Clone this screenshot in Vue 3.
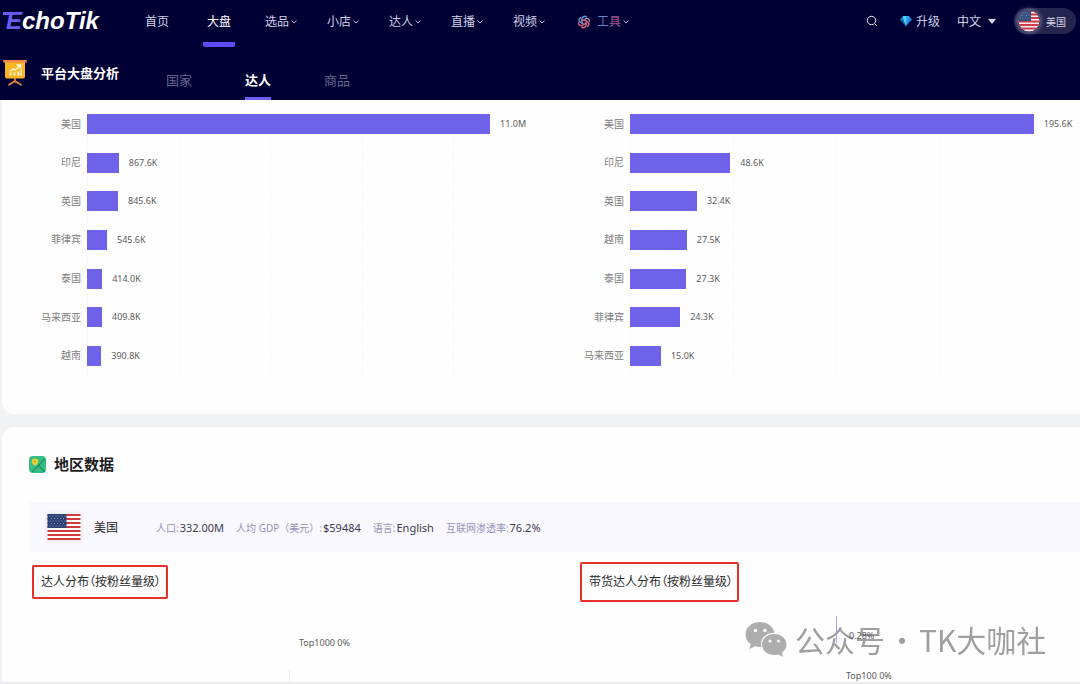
<script setup>
const menus = ['选品', '小店', '达人', '直播', '视频']
const charts = [
  {
    name: '达人数量', max: 12280, ticks: [0, 2500, 5000, 7500, 10000],
    rows: [
      ['美国', 11000, '11.0M'], ['印尼', 867.6, '867.6K'], ['英国', 845.6, '845.6K'],
      ['菲律宾', 545.6, '545.6K'], ['泰国', 414, '414.0K'], ['马来西亚', 409.8, '409.8K'],
      ['越南', 390.8, '390.8K'],
    ],
  },
  {
    name: '带货达人数量', max: 218, ticks: [0, 50, 100, 150],
    rows: [
      ['美国', 195.6, '195.6K'], ['印尼', 48.6, '48.6K'], ['英国', 32.4, '32.4K'],
      ['越南', 27.5, '27.5K'], ['泰国', 27.3, '27.3K'], ['菲律宾', 24.3, '24.3K'],
      ['马来西亚', 15, '15.0K'],
    ],
  },
]
const facts = [
  ['人口:', '332.00M'],
  ['人均 GDP（美元）:', '$59484'],
  ['语言:', 'English'],
  ['互联网渗透率:', '76.2%'],
]
const pct = (v, max) => (v / max) * 100 + '%'
</script>

<template>
  <div class="page">
    <header class="header">
      <div class="topbar">
        <a href="#" class="logo"><span class="logo-e">E</span>choTik</a>
        <nav class="nav">
          <a href="#" class="nav-item home">首页</a>
          <a href="#" class="nav-item active">大盘</a>
          <button v-for="m in menus" :key="m" type="button" class="nav-item">
            {{ m }}<svg class="chev" viewBox="0 0 6 4"><path d="M.5 .5 3 3 5.500 .5" /></svg>
          </button>
          <button type="button" class="nav-item tools">
            <svg class="knot" viewBox="0 0 24 24">
              <defs>
                <linearGradient id="knotFill" gradientUnits="userSpaceOnUse" x1="2" y1="2" x2="22" y2="22">
                  <stop offset="0" stop-color="#3fb4ee" />
                  <stop offset=".5" stop-color="#e8607c" />
                  <stop offset="1" stop-color="#c05cb0" />
                </linearGradient>
              </defs>
              <g fill="none" stroke="url(#knotFill)" stroke-width="1.800">
                <path d="M8.500 14V6.500a4.500 4.500 0 0 1 8.300-2.400M8.500 10l6.300-3.600a4.500 4.500 0 0 1 6.300 5" />
                <path transform="rotate(60 12 12)" d="M8.500 14V6.500a4.500 4.500 0 0 1 8.300-2.400M8.500 10l6.300-3.600a4.500 4.500 0 0 1 6.300 5" />
                <path transform="rotate(120 12 12)" stroke="#e0607c" d="M8.500 14V6.500a4.500 4.500 0 0 1 8.300-2.400M8.500 10l6.300-3.600a4.500 4.500 0 0 1 6.300 5" />
                <path transform="rotate(180 12 12)" stroke="#e0607c" d="M8.500 14V6.500a4.500 4.500 0 0 1 8.300-2.400M8.500 10l6.300-3.600a4.500 4.500 0 0 1 6.300 5" />
                <path transform="rotate(240 12 12)" stroke="#d8608c" d="M8.500 14V6.500a4.500 4.500 0 0 1 8.300-2.400M8.500 10l6.300-3.600a4.500 4.500 0 0 1 6.300 5" />
                <path transform="rotate(300 12 12)" stroke="#55a4e0" d="M8.500 14V6.500a4.500 4.500 0 0 1 8.300-2.400M8.500 10l6.300-3.600a4.500 4.500 0 0 1 6.300 5" />
              </g>
            </svg>
            <span class="tools-text">工具</span><svg class="chev" viewBox="0 0 6 4"><path d="M.5 .5 3 3 5.500 .5" /></svg>
          </button>
        </nav>
        <div class="actions">
          <button type="button" class="search" aria-label="搜索">
            <svg viewBox="0 0 12 12"><circle cx="5.500" cy="5.500" r="4.200" /><path d="m8.600 8.600 2.200 2.200" /></svg>
          </button>
          <a href="#" class="upgrade">
            <svg viewBox="0 0 12 10">
              <path fill="#1c84d8" d="M3 0h6l3 3.500L6 10 0 3.500z" />
              <path fill="#55d0f4" d="M3 0h3v10L3.300 3.500z" />
              <path fill="#2ba8ea" d="M6 0h3l-.3 3.500L6 10z" />
              <path fill="#1764b8" d="M0 3.500h3.300L6 10z" />
            </svg>
            升级
          </a>
          <button type="button" class="lang">中文<i class="caret"></i></button>
          <button type="button" class="country">
            <svg class="round-flag" viewBox="0 0 22 22">
              <defs><clipPath id="disc"><circle cx="11" cy="11" r="10.500" /></clipPath></defs>
              <g clip-path="url(#disc)">
                <path fill="#f4eff3" d="M0 0h22v22H0z" />
                <path stroke="#cf3b48" stroke-width="1.800" d="M0 1h22M0 4.500h22M0 8h22M0 11.500h22M0 15h22M0 18.500h22M0 22h22" />
                <path fill="#34507c" d="M0 0h13v11H0z" />
                <path stroke="#7088ac" stroke-dasharray="1 1.500" d="M2 3h10M3 5.500h9M2 8h10" />
              </g>
            </svg>
            美国
          </button>
        </div>
      </div>
      <div class="subbar">
        <svg class="board" viewBox="0 0 24 26">
          <path stroke="#ee8247" stroke-width="1.600" stroke-linecap="round" fill="none" d="M12 18v4M12 21l-6 3.800M12 21l6 3.800" />
          <path fill="#fcb625" d="M2 2h20v14.500a2 2 0 0 1-2 2H4a2 2 0 0 1-2-2z" />
          <rect width="24" height="2.600" rx="1.300" fill="#f0884a" />
          <path fill="#fff3c8" d="M6.500 12.500h2v3h-2zm4 0h2v3h-2zm4-1h2v4h-2zm3-2h1.500v6h-1.500z" />
          <path stroke="#fffbe8" stroke-width="1.400" fill="none" d="m6.500 11.500 4-2.500 2 1 4.500-4.500M13.500 5H17.500v3.500" />
        </svg>
        <h1>平台大盘分析</h1>
        <nav class="tabs">
          <a href="#" class="tab">国家</a>
          <a href="#" class="tab on">达人</a>
          <a href="#" class="tab">商品</a>
        </nav>
      </div>
    </header>

    <main>
      <section class="card charts">
        <div v-for="c in charts" :key="c.name" class="chart" role="img" :aria-label="c.name">
          <div class="grid">
            <i v-for="t in c.ticks" :key="t" :style="{ left: pct(t, c.max) }"></i>
          </div>
          <div v-for="r in c.rows" :key="r[0]" class="row">
            <span class="name">{{ r[0] }}</span>
            <div class="track">
              <div class="bar" :style="{ width: pct(r[1], c.max) }"></div>
              <span class="val">{{ r[2] }}</span>
            </div>
          </div>
        </div>
      </section>

      <section class="card region">
        <h2>
          <svg viewBox="0 0 17 17">
            <rect width="17" height="17" rx="4" fill="#35bd83" />
            <path stroke="#238f68" stroke-width="1.200" d="M16 3 3 16M9.500 9.500l6.500 6.500" />
            <path fill="#e6d63b" d="M6 2.500a3.200 3.200 0 0 1 3.200 3.200C9.200 8 6 9.500 6 9.500S2.800 8 2.800 5.700A3.200 3.200 0 0 1 6 2.500z" />
            <circle cx="6" cy="5.600" r="1" fill="#c08a1c" />
          </svg>
          地区数据
        </h2>
        <div class="facts">
          <svg class="flag" viewBox="0 0 33 26">
            <path fill="#fff" d="M0 0h33v26H0z" />
            <path stroke="#d23a41" stroke-width="2" d="M0 1h33M0 5h33M0 9h33M0 13h33M0 17h33M0 21h33M0 25h33" />
            <path fill="#2b3f73" d="M0 0h19v14H0z" />
            <path stroke="#8c9cc0" stroke-dasharray="1 2" d="M2 2h16M3.500 4.500h14M2 7h16M3.500 9.500h14M2 12h16" />
          </svg>
          <span class="land">美国</span>
          <dl>
            <div v-for="f in facts" :key="f[0]">
              <dt>{{ f[0] }}</dt>
              <dd>{{ f[1] }}</dd>
            </div>
          </dl>
        </div>
        <div class="pies">
          <div class="pie left">
            <h3>达人分布（按粉丝量级）</h3>
            <span class="callout a">Top1000 0%</span>
            <i class="tick b"></i>
          </div>
          <div class="pie right">
            <h3>带货达人分布（按粉丝量级）</h3>
            <div class="mark">
              <svg viewBox="0 0 42 36">
                <path fill="#999" d="M15 1C6.800 1 .5 6.500.5 13.500c0 4 2 7.300 5.300 9.600L4.500 28l5.500-2.800c1.600.5 3.400.8 5 .8h1.400C14.500 18 21 11.500 29.500 11.800 28 5.500 22 1 15 1z" />
                <path fill="#999" d="M41.500 23.500c0-5.900-5.600-10.500-12.300-10.500S17 17.600 17 23.500 22.500 34 29.200 34c1.600 0 3-.2 4.300-.6L38 36l-1.200-4.300c2.900-2 4.700-4.900 4.700-8.200z" />
                <g fill="#fff"><circle cx="10.500" cy="9.500" r="1.800" /><circle cx="20" cy="9.500" r="1.800" /><circle cx="25" cy="20" r="1.500" /><circle cx="33.500" cy="20" r="1.500" /></g>
              </svg>
              <span>公众号</span><span class="dot">·</span><span>TK大咖社</span>
            </div>
            <i class="tick c"></i>
            <span class="callout d">0.28%</span>
            <span class="callout e">Top100 0%</span>
          </div>
        </div>
      </section>
    </main>
  </div>
</template>

<style>
body { margin: 0; background: #f1f2f4; }
</style>

<style scoped>
.page {
  font-family: "Noto Sans", "Noto Sans CJK SC", sans-serif;
  font-size: 12px;
  color: #333;
  overflow: hidden;
}
a { text-decoration: none; color: inherit; }
button { font: inherit; color: inherit; background: none; border: 0; padding: 0; }
h1, h2, h3, dl, dd { margin: 0; }
svg { display: block; flex: none; }

.header { background: #000035; color: #d2d2e6; }
.topbar { display: flex; align-items: flex-start; height: 48px; }
.logo {
  display: flex;
  box-sizing: border-box;
  width: 145px;
  padding: 7px 0 0 6px;
  font: italic bold 24px/28px "Liberation Sans", Arial, sans-serif;
  color: #fff;
}
.logo-e { position: relative; color: #6a5cf0; }
.logo-e::before {
  content: "";
  position: absolute;
  left: -3px;
  top: 5px;
  width: 8px;
  height: 3px;
  background: #6a5cf0;
}
.nav { display: flex; gap: 30px; }
.nav-item {
  display: flex;
  align-items: center;
  gap: 2px;
  box-sizing: border-box;
  height: 42px;
  padding-top: 2px;
  line-height: 18px;
  white-space: nowrap;
}
.home { margin-right: 4px; }
.active { height: 47px; padding: 2px 4px 0; border-bottom: 5px solid #5f4bf5; border-radius: 2px; color: #fff; }
.chev { width: 6px; height: 4px; fill: none; stroke: #b4b4d0; stroke-width: 1; }
.tools { margin-left: 2px; }
.knot { width: 14px; height: 14px; margin-right: 4px; }
.tools-text {
  background: linear-gradient(90deg, #4a8fe0, #d8508c);
  -webkit-background-clip: text;
  background-clip: text;
  color: transparent;
}
.actions { display: flex; align-items: center; margin-left: auto; height: 42px; padding-right: 4px; white-space: nowrap; }
.search svg { width: 12px; height: 12px; fill: none; stroke: #e8e8f4; stroke-width: 1; }
.upgrade { display: flex; align-items: center; gap: 4px; margin-left: 22px; }
.upgrade svg { width: 12px; height: 10px; }
.lang { display: flex; align-items: center; gap: 7px; margin-left: 17px; }
.caret { border: 4px solid transparent; border-top: 5px solid #dcdcec; border-bottom: 0; }
.country {
  display: flex;
  align-items: center;
  gap: 6px;
  box-sizing: border-box;
  height: 26px;
  margin-left: 18px;
  padding: 0 10px 0 4px;
  border-radius: 13px;
  background: #25254f;
  font-size: 10px;
}
.round-flag { width: 22px; height: 22px; border-radius: 50%; box-shadow: 0 0 4px 1px #74749a; }

.subbar { display: flex; align-items: flex-start; height: 52px; padding-left: 3px; }
.board { width: 24px; height: 26px; margin-top: 12px; }
h1 { margin-left: 14px; padding-top: 15px; font-size: 13px; line-height: 20px; color: #fff; }
.tabs { display: flex; gap: 53px; margin-left: 47px; }
.tab { box-sizing: border-box; height: 52px; padding-top: 22px; font-size: 13px; line-height: 20px; color: #66668a; }
.on { color: #fff; font-weight: bold; border-bottom: 3px solid #6c5ff0; }

.card { margin-left: 2px; background: #fefefe; }
.charts {
  display: grid;
  grid-template-columns: 1fr 1fr;
  gap: 8px;
  padding: 5px 0 39px;
  border-radius: 0 0 0 12px;
}
.chart { position: relative; display: grid; grid-template-rows: repeat(7, 1fr); height: 270px; }
.grid { position: absolute; inset: 0 0 0 85px; }
.grid i { position: absolute; top: 32px; bottom: 0; border-left: 1px dashed #f6f6f8; }
.row { position: relative; display: flex; align-items: center; gap: 6px; font-size: 10px; }
.name { width: 79px; padding-bottom: 2px; text-align: right; color: #808080; }
.track { flex: 1; display: flex; align-items: center; gap: 10px; white-space: nowrap; }
.bar { flex: none; height: 20px; background: #6e62ea; }
.val { padding-bottom: 1px; font-size: 9px; color: #5c5c5c; }

.region { margin-top: 13px; border-radius: 12px 0 0 0; border-bottom: 2px solid #ececee; padding-top: 26px; }
h2 { display: flex; align-items: center; gap: 8px; padding-left: 27px; font-size: 15px; line-height: 23px; color: #1c1c22; }
h2 svg { width: 17px; height: 17px; }
.facts {
  display: flex;
  align-items: center;
  height: 50px;
  margin: 26px 0 0 27px;
  padding-left: 18px;
  background: #f9f8fe;
  white-space: nowrap;
}
.flag { width: 34px; height: 26px; box-shadow: 0 0 4px #dcdce6; }
.land { margin-left: 13px; color: #222; }
dl { display: flex; gap: 12px; margin-left: 38px; }
dl div { display: flex; align-items: baseline; gap: 1px; }
dt { font-size: 10px; color: #9692b6; }
dd { font-size: 11px; color: #3c3850; }

.pies { display: grid; grid-template-columns: 548px 1fr; height: 130px; padding-left: 30px; }
.pie { position: relative; }
h3 {
  box-sizing: border-box;
  border: 2px solid #e8302a;
  border-radius: 2px;
  font-size: 12px;
  font-weight: normal;
  font-feature-settings: "palt";
  line-height: 18px;
  color: #2c2c2c;
  white-space: nowrap;
}
.left h3 { width: 136px; margin-top: 13px; padding: 6px 0 6px 7px; }
.right h3 { width: 159px; margin-top: 10px; padding: 9px 0 9px 7px; }
.callout { position: absolute; font-size: 9px; line-height: 14px; color: #5c5c5c; white-space: nowrap; }
.tick { position: absolute; width: 1px; }
.a { left: 267px; top: 84px; }
.b { left: 257px; bottom: 0; height: 12px; background: #eeeef2; }
.c { left: 256px; top: 64px; height: 27px; background: #a8a2f2; }
.d { left: 269px; top: 77px; }
.e { left: 266px; top: 117px; }
.mark {
  position: absolute;
  left: 165px;
  top: 65px;
  display: flex;
  align-items: center;
  font: 30px/44px "Noto Sans CJK SC", sans-serif;
  color: #888;
  opacity: .8;
  white-space: nowrap;
}
.mark svg { width: 42px; height: 36px; margin-right: 8px; }
.dot { width: 30px; margin: 0 2px; text-align: center; }
</style>
